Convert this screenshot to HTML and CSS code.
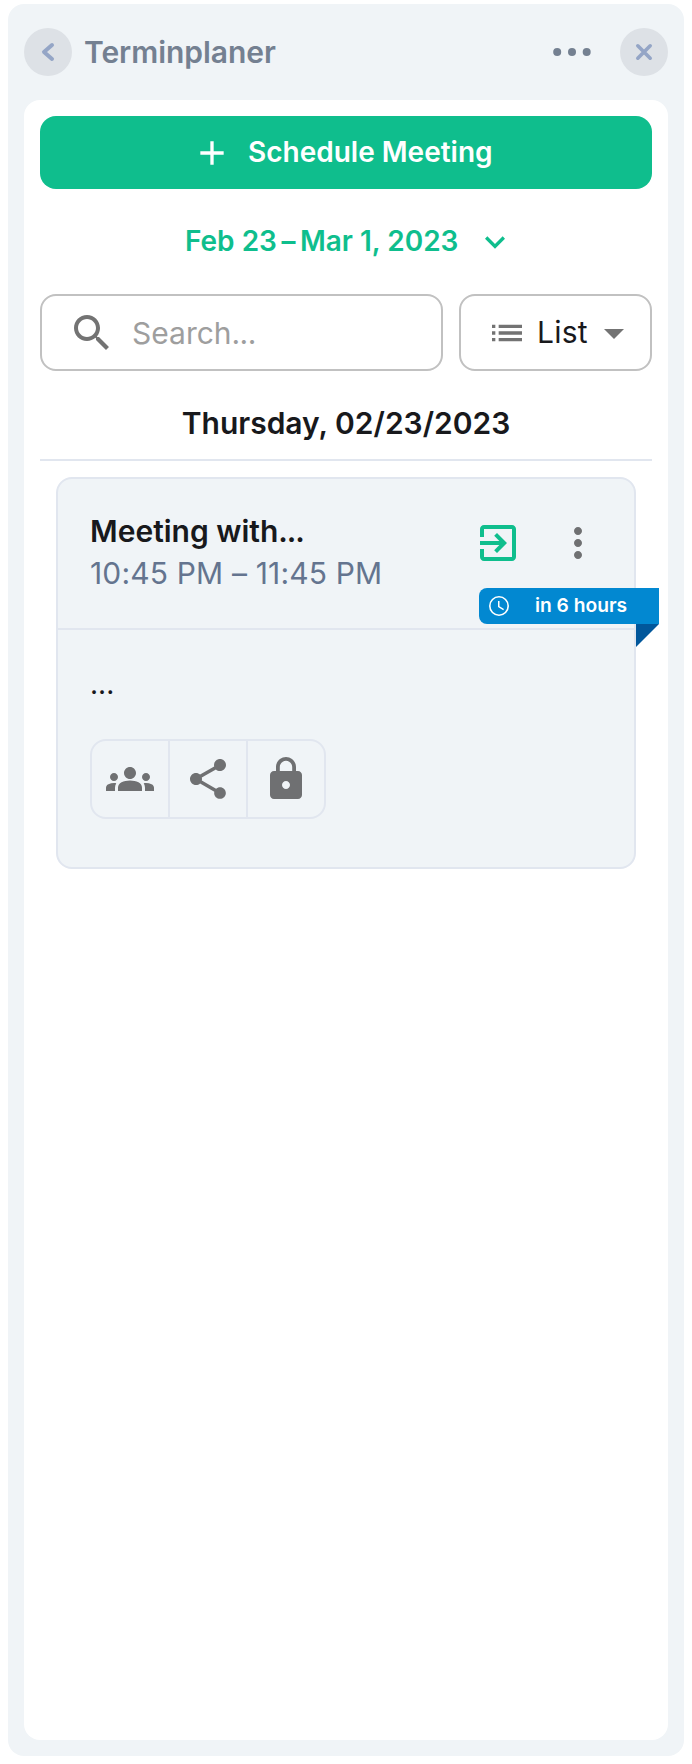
FILE: index.html
```html
<!DOCTYPE html>
<html lang="en">
<head>
<meta charset="utf-8">
<title>Terminplaner</title>
<link rel="stylesheet" href="styles.css">
</head>
<body>
<main class="panel">
  <header class="header">
    <button class="round" aria-label="Back"><svg width="48" height="48" viewBox="0 0 48 48"><path class="line" d="M28 17 L20 24 L28 31"/></svg></button>
    <h1 class="title">Terminplaner</h1>
    <svg class="more" width="40" height="8" viewBox="0 0 40 8"><circle cx="5.2" cy="4" r="4"/><circle cx="20" cy="4" r="4"/><circle cx="34.7" cy="4" r="4"/></svg>
    <button class="round" aria-label="Close"><svg width="48" height="48" viewBox="0 0 48 48"><path class="line thin" d="M17.800 17.800 L30.200 30.200 M30.200 17.800 L17.800 30.200"/></svg></button>
  </header>
  <section class="content">
    <button class="schedule">
      <svg width="40" height="40" viewBox="0 0 24 24"><path d="M19 13h-6v6h-2v-6H5v-2h6V5h2v6h6v2z"/></svg>
      <span class="schedule-label">Schedule Meeting</span>
    </button>
    <div class="range">
      <span class="range-label"><span>Feb 23</span><span class="dash">–</span><span>Mar 1, 2023</span></span>
      <svg width="40" height="40" viewBox="0 0 24 24"><path d="M7.41 8.59 12 13.17l4.59-4.58L18 10l-6 6-6-6 1.41-1.41z"/></svg>
    </div>
    <div class="filters">
      <div class="search">
        <svg width="48" height="48" viewBox="0 0 24 24"><path d="M15.5 14h-.79l-.28-.27C15.41 12.59 16 11.11 16 9.5 16 5.91 13.09 3 9.5 3S3 5.91 3 9.5 5.91 16 9.5 16c1.61 0 3.09-.59 4.23-1.57l.27.28v.79l5 4.99L20.49 19l-4.99-5zm-6 0C7.01 14 5 11.99 5 9.5S7.01 5 9.5 5 14 7.01 14 9.5 11.99 14 9.5 14z"/></svg>
        <span class="search-label">Search<span class="dots">...</span></span>
      </div>
      <div class="select">
        <svg width="40" height="40" viewBox="0 0 24 24"><path d="M3 13h2v-2H3v2zm0 4h2v-2H3v2zm0-8h2V7H3v2zm4 4h14v-2H7v2zm0 4h14v-2H7v2zM7 7v2h14V7H7z"/></svg>
        <span class="select-label">List</span>
        <svg class="caret" width="48" height="48" viewBox="0 0 24 24"><path d="m7 10 5 5 5-5z"/></svg>
      </div>
    </div>
    <h2 class="day"><span class="day-label">Thursday, 02/23/2023</span></h2>
    <article class="card">
      <div class="card-head">
        <div class="card-text">
          <h3 class="card-title">Meeting with<span class="dots-bold">...</span></h3>
          <p class="card-time">10:45 PM – 11:45 PM</p>
        </div>
        <svg class="enter" width="48" height="48" viewBox="0 0 24 24"><path d="M10.09 15.59 11.5 17l5-5-5-5-1.41 1.41L12.67 11H3v2h9.67l-2.58 2.59zM19 3H5c-1.11 0-2 .9-2 2v4h2V5h14v14H5v-4H3v4c0 1.1.89 2 2 2h14c1.1 0 2-.9 2-2V5c0-1.1-.9-2-2-2z"/></svg>
        <svg class="icon" width="48" height="48" viewBox="0 0 24 24"><path d="M12 8c1.100 0 2-.9 2-2s-.9-2-2-2-2 .9-2 2 .9 2 2 2zm0 2c-1.100 0-2 .9-2 2s.9 2 2 2 2-.9 2-2-.9-2-2-2zm0 6c-1.100 0-2 .9-2 2s.9 2 2 2 2-.9 2-2-.9-2-2-2z"/></svg>
      </div>
      <div class="badge">
        <svg width="24" height="24" viewBox="0 0 24 24"><path d="M12 2a10 10 0 1 0 0 20 10 10 0 0 0 0-20zm0 18.400a8.400 8.400 0 1 1 0-16.800 8.400 8.400 0 0 1 0 16.800zm.5-13.400H11v6l5.250 3.150.75-1.230-4.500-2.670z"/></svg>
        <span class="badge-label">in 6 hours</span>
      </div>
      <div class="card-body">
        <p class="desc">...</p>
        <div class="group">
          <div class="cell"><svg class="icon" width="48" height="48" viewBox="0 0 24 24"><path d="M4 13c1.100 0 2-.9 2-2s-.9-2-2-2-2 .9-2 2 .9 2 2 2zm1.130 1.100c-.37-.06-.74-.1-1.130-.1-.99 0-1.930.21-2.780.58C.48 14.900 0 15.620 0 16.430V18h4.500v-1.610c0-.83.23-1.610.63-2.290zM20 13c1.100 0 2-.9 2-2s-.9-2-2-2-2 .9-2 2 .9 2 2 2zm4 3.430c0-.81-.48-1.530-1.220-1.850-.85-.37-1.790-.58-2.780-.58-.39 0-.76.04-1.130.1.4.68.63 1.460.63 2.290V18H24v-1.570zM16.240 13.650c-1.170-.52-2.610-.9-4.240-.9-1.630 0-3.070.39-4.240.9C6.680 14.130 6 15.210 6 16.390V18h12v-1.610c0-1.180-.68-2.260-1.760-2.740zM9 9c0 1.660 1.340 3 3 3s3-1.340 3-3-1.340-3-3-3-3 1.340-3 3z"/></svg></div>
          <div class="cell"><svg class="icon" width="48" height="48" viewBox="0 0 24 24"><path d="M18 16.080c-.76 0-1.440.3-1.960.77L8.910 12.700c.05-.23.09-.46.09-.7s-.04-.47-.09-.7l7.050-4.110c.54.5 1.250.81 2.040.81 1.660 0 3-1.340 3-3s-1.340-3-3-3-3 1.340-3 3c0 .24.04.47.09.7L8.040 9.810C7.500 9.310 6.790 9 6 9c-1.660 0-3 1.340-3 3s1.340 3 3 3c.79 0 1.500-.31 2.040-.81l7.120 4.160c-.05.21-.08.43-.08.65 0 1.610 1.310 2.920 2.920 2.920s2.920-1.310 2.920-2.920-1.310-2.920-2.920-2.920z"/></svg></div>
          <div class="cell"><svg class="icon" width="48" height="48" viewBox="0 0 24 24"><path d="M18 8h-1V6c0-2.760-2.240-5-5-5S7 3.240 7 6v2H6c-1.100 0-2 .9-2 2v10c0 1.100.9 2 2 2h12c1.100 0 2-.9 2-2V10c0-1.100-.9-2-2-2zm-6 9c-1.100 0-2-.9-2-2s.9-2 2-2 2 .9 2 2-.9 2-2 2zm3.100-9H8.900V6c0-1.710 1.390-3.100 3.100-3.100s3.100 1.390 3.100 3.100v2z"/></svg></div>
        </div>
      </div>
    </article>
  </section>
</main>
</body>
</html>
```
FILE: styles.css
```css
* { box-sizing: border-box; margin: 0; padding: 0; }
body { background: #fff; font-family: Inter, "Liberation Sans", sans-serif; color: #18191c; }
svg { display: block; flex: none; fill: currentColor; }
button { border: 0; font: inherit; color: inherit; }
span, h1, h2, h3, p { white-space: nowrap; }

.panel { margin: 4px 8px 8px; width: 676px; height: 1752px; padding: 0 16px 16px; border-radius: 16px; background: #f0f4f7; display: flex; flex-direction: column; }
.header { height: 96px; flex: none; display: flex; align-items: center; }
.round { width: 48px; height: 48px; border-radius: 50%; background: #dde1e6; color: #94a5c6; }
.line { fill: none; stroke: currentColor; stroke-width: 4; stroke-linecap: round; stroke-linejoin: round; }
.thin { stroke-width: 3.6; }
.title { flex: 1; margin-left: 12px; font-size: 30px; line-height: 40px; font-weight: 600; letter-spacing: -0.05px; color: #748091; }
.more { margin-right: 28px; color: #748091; }

.content { flex: 1; padding: 16px; border-radius: 16px; background: #fff; }
.schedule { width: 100%; height: 73px; padding-left: 152px; display: flex; align-items: center; gap: 16px; border-radius: 16px; background: #0fbe8d; color: #fff; font-size: 28px; line-height: 40px; font-weight: 600; }
.schedule-label, .range-label, .badge-label { padding-bottom: 2px; }
.range { height: 105px; padding-left: 145px; display: flex; align-items: center; color: #0fbe8d; font-size: 28px; line-height: 40px; font-weight: 600; }
.range-label { width: 290px; display: flex; }
.dash { margin: 0 4.500px; }

.filters { display: flex; gap: 16px; height: 77px; }
.search, .select { display: flex; align-items: center; border: 2px solid #c1c1c1; border-radius: 16px; color: #737373; font-size: 30px; line-height: 40px; }
.search { width: 403px; padding-left: 26px; }
.search-label { margin-left: 16px; color: #9e9e9e; }
.dots { letter-spacing: -0.6px; }
.select { width: 193px; padding-left: 26px; }
.select-label { width: 53px; margin-left: 10px; padding-bottom: 1px; letter-spacing: 0.2px; color: #18191c; }

.day { height: 90px; padding-top: 32px; border-bottom: 2px solid #e1e6ef; text-align: center; font-size: 30px; line-height: 40px; font-weight: 600; }

.card { position: relative; margin: 16px 16px 0; height: 392px; border: 2px solid #e1e6ef; border-radius: 16px; background: #f0f4f7; }
.card-head { height: 151px; padding: 31px 32px 0; border-bottom: 2px solid #e1e6ef; display: flex; }
.card-text { width: 384px; }
.card-title { font-size: 30px; line-height: 42px; font-weight: 600; }
.dots-bold { letter-spacing: -1.100px; }
.card-time { font-size: 30px; line-height: 42px; letter-spacing: 0.160px; color: #64748f; }
.enter { margin-top: 9px; color: #0fbe8d; }
.icon { color: #6f7072; }
.card-head .icon { margin: 9px 0 0 32px; }
.card-body { padding: 34px 32px 0; }
.desc { font-size: 28px; line-height: 40px; height: 75px; }
.group { width: 236px; height: 80px; display: flex; border: 2px solid #e1e6ef; border-radius: 16px; }
.cell { flex: 1 1 76px; display: flex; align-items: center; justify-content: center; }
.cell + .cell { flex-basis: 78px; border-left: 2px solid #e1e6ef; }

.badge { position: absolute; left: 421px; top: 109px; width: 180px; height: 36px; padding-left: 8px; display: flex; align-items: center; border-radius: 8px 0 0 8px; background: #0288d1; color: #fff; font-size: 19.200px; line-height: 28px; font-weight: 600; }
.badge::after { content: ""; position: absolute; right: 0; top: 36px; border-top: 23px solid #01579b; border-right: 23px solid transparent; }
.badge-label { margin-left: 24px; }
```
